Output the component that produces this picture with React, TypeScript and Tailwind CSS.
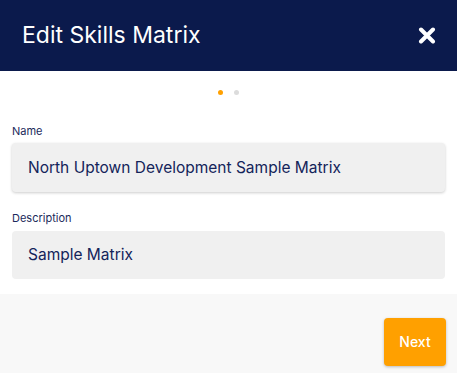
export default function App() {
  return (
    <div className="w-[457px] h-[373px] flex flex-col bg-white font-['Inter',sans-serif]">
      <header className="h-[71px] shrink-0 bg-[#0b1a4c] flex items-center justify-between pl-[22px] pr-[21px]">
        <h1 className="text-[23px] text-white leading-none">Edit Skills Matrix</h1>
        <button className="text-white" aria-label="Close">
          <svg width="18" height="17" viewBox="0 0 18 17">
            <path d="M3 2.5 L15 14.5 M15 2.5 L3 14.5" stroke="currentColor" strokeWidth="4" strokeLinecap="round" />
          </svg>
        </button>
      </header>

      <div className="flex justify-center gap-[11px] pt-[19px]">
        <span className="w-[5px] h-[5px] rounded-full bg-[#ffa000]" />
        <span className="w-[5px] h-[5px] rounded-full bg-[#dcdcdc]" />
      </div>

      <div className="px-3 pt-[31px] flex flex-col">
        <label className="text-[11px] text-[#1b2a5b] leading-none">Name</label>
        <div className="mt-[6px] h-[49px] rounded bg-[#f0f0f0] shadow-[0_1px_3px_rgba(0,0,0,0.2)] flex items-center px-4 text-[15.5px] text-[#14245a]">
          North Uptown Development Sample Matrix
        </div>
        <label className="mt-[21px] text-[11px] text-[#1b2a5b] leading-none">Description</label>
        <div className="mt-[7px] h-[48px] rounded bg-[#f0f0f0] flex items-center px-4 text-[15.5px] text-[#14245a]">
          Sample Matrix
        </div>
      </div>

      <footer className="mt-[15px] flex-1 bg-[#f8f8f8] flex justify-end items-start pt-6 pr-[11px]">
        <button className="w-[62px] h-[48px] rounded bg-[#ffa000] text-white text-sm font-medium shadow-[0_1px_3px_rgba(0,0,0,0.25)]">
          Next
        </button>
      </footer>
    </div>
  )
}
